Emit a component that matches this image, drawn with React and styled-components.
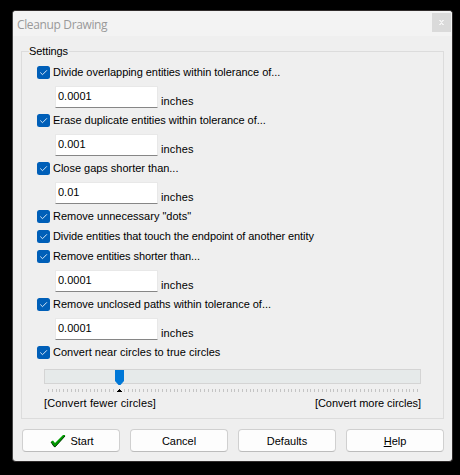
import React from "react";
import styled, { createGlobalStyle } from "styled-components";

const GlobalStyle = createGlobalStyle`
  * { box-sizing: border-box; }
  body { margin: 0; background: #000; overflow: hidden; }
`;

const Desktop = styled.main`
  width: 460px;
  height: 475px;
  padding: 10px 7px 13px 12px;
  background: #000;
  color: #000;
  font: 11px/14px "Liberation Sans", Arial, sans-serif;
`;

const Dialog = styled.section`
  width: 441px;
  height: 452px;
  display: flex;
  flex-direction: column;
  border: 1px solid #302c2c;
  border-left-color: #454545;
  border-radius: 4px;
  background: #efefef;
  overflow: hidden;
`;

const TitleBar = styled.header`
  flex: 0 0 25px;
  display: flex;
  justify-content: space-between;
  align-items: flex-start;
  padding: 2px 1px 0 4px;
  background: #f3f3f3;
`;

const Title = styled.h1`
  margin: 0;
  padding-top: 3px;
  color: #999;
  font: 400 12px/18px "Open Sans", "Noto Sans", sans-serif;
  letter-spacing: -0.36px;
`;

const CloseButton = styled.button`
  width: 19px;
  height: 19px;
  display: grid;
  place-items: center;
  padding: 0;
  border: 0;
  background: #dadada;
`;

const Body = styled.div`
  flex: 1;
  display: flex;
  flex-direction: column;
  padding: 9px 7px 0 8px;
`;

const Settings = styled.fieldset`
  height: 374px;
  margin: 0;
  min-width: 0;
  width: 423px;
  padding: 4px 0 0 15px;
  border: 1px solid #dcdcdc;
`;

const Legend = styled.legend`
  height: 13px;
  margin-left: -8px;
  padding: 0 1px 0 0;
  line-height: 12px;
`;

const Label = styled.span`
  white-space: pre;
  letter-spacing: ${(p) => p.$spacing || 0}px;
`;

const CheckRow = styled.label`
  height: 20px;
  display: flex;
  align-items: center;
  gap: 3px;
`;

const CheckMark = styled.span`
  width: 13px;
  height: 13px;
  display: grid;
  place-items: center;
  border-radius: 2.5px;
  background: #005fb8;
`;

const ValueRow = styled.div`
  height: 28px;
  display: flex;
  align-items: flex-start;
  gap: 3px;
  padding: 4px 0 0 18px;
`;

const ValueInput = styled.input`
  width: 103px;
  height: 22px;
  padding: 0 3px 2px 2px;
  border: 1px solid #e8e8e8;
  border-bottom-color: #868686;
  border-radius: 1px;
  outline: 0;
  background: #fff;
  color: #000;
  font: inherit;
`;

const Unit = styled.span`
  padding-top: 8px;
  letter-spacing: 0.15px;
`;

const Slider = styled.div`
  width: 377px;
  margin: 7px 0 0 7px;
`;

const Track = styled.div`
  height: 15px;
  padding-left: 70px;
  border: 1px solid #d4d4d4;
  background: #e6eaea;
`;

const Drawing = styled.svg`
  display: block;
  flex: none;
`;

const Captions = styled.div`
  display: flex;
  justify-content: space-between;
  margin-top: 3px;
`;

const Buttons = styled.footer`
  display: flex;
  gap: 10px;
  margin-top: 10px;
  padding-left: 1px;
`;

const Button = styled.button`
  width: 98px;
  height: 23px;
  display: flex;
  align-items: center;
  justify-content: center;
  gap: 4px;
  padding: 0;
  border: 1px solid #d0d0d0;
  border-bottom-color: #bcbcbc;
  border-radius: 4px;
  background: #fdfdfd;
  color: #000;
  font: inherit;
`;

const StartButton = styled(Button)`
  padding-left: 2px;
`;

const options = [
  { text: "Divide overlapping entities within tolerance of...", value: "0.0001", spacing: -0.04 },
  { text: "Erase duplicate entities within tolerance of...", value: "0.001", spacing: -0.04 },
  { text: "Close gaps shorter than...", value: "0.01", spacing: -0.02 },
  { text: 'Remove unnecessary "dots"' },
  { text: "Divide entities that touch the endpoint of another entity", spacing: -0.08 },
  { text: "Remove entities shorter than...", value: "0.0001", spacing: -0.09 },
  { text: "Remove unclosed paths within tolerance of...", value: "0.0001", spacing: -0.02 },
  { text: "Convert near circles to true circles", spacing: 0.03 },
];

const ticks = Array.from({ length: 98 }, (_, i) => Math.round(4 + (i * 369) / 97));

function Option({ text, value, spacing }) {
  return (
    <>
      <CheckRow>
        <CheckMark>
          <Drawing width="13" height="13" viewBox="0 0 13 13">
            <path d="M3.3 6.5 5.5 8.7 9.9 4.3" fill="none" stroke="#d5e6f5" strokeWidth="1" />
          </Drawing>
        </CheckMark>
        <Label $spacing={spacing}>{text}</Label>
      </CheckRow>
      {value && (
        <ValueRow>
          <ValueInput defaultValue={value} aria-label={text} />
          <Unit>inches</Unit>
        </ValueRow>
      )}
    </>
  );
}

export default function App() {
  return (
    <Desktop>
      <GlobalStyle />
      <Dialog>
        <TitleBar>
          <Title>Cleanup Drawing</Title>
          <CloseButton aria-label="Close">
            <Drawing width="5" height="5" viewBox="0 0 5 5" shapeRendering="crispEdges">
              <path d="M0 0h2v1H0zM3 0h2v1H3zM1 1h3v1H1zM2 2h1v1H2zM1 3h3v1H1zM0 4h2v1H0zM3 4h2v1H3z" fill="#f3f3f3" />
            </Drawing>
          </CloseButton>
        </TitleBar>
        <Body>
          <Settings>
            <Legend><Label $spacing={-0.1}>Settings</Label></Legend>
            {options.map((o) => <Option key={o.text} {...o} />)}
            <Slider>
              <Track>
                <Drawing width="9" height="15" viewBox="0 0 9 15">
                  <path d="M0 0h9v11L5.5 15h-2L0 11z" fill="#0078d7" />
                </Drawing>
              </Track>
              <Drawing width="377" height="9" viewBox="0 0 377 9" shapeRendering="crispEdges">
                {ticks.map((x) => <path key={x} d={`M${x} 5h1v3h-1z`} fill="#c4c4c4" />)}
                <path d="M72 5h7v3h-7z" fill="#efefef" />
                <path d="M75 5h1v1h1v1h1v1h-5V7h1V6h1z" fill="#000" />
              </Drawing>
              <Captions>
                <Label $spacing={0.14}>[Convert fewer circles]</Label>
                <Label $spacing={-0.04}>[Convert more circles]</Label>
              </Captions>
            </Slider>
          </Settings>
          <Buttons>
            <StartButton>
              <Drawing width="16" height="14" viewBox="0 0 16 14">
                <path d="M1 7.5 3 6.5 5 9 13 1 15.3 1 14.3 3 5 13 3.5 12z" fill="#009a00" />
                <path d="M1 8 4 12.5 5.2 12.8 15 2" fill="none" stroke="#003800" strokeWidth="1" />
              </Drawing>
              <Label>Start</Label>
            </StartButton>
            <Button><Label>Cancel</Label></Button>
            <Button><Label>Defaults</Label></Button>
            <Button><Label><u>H</u>elp</Label></Button>
          </Buttons>
        </Body>
      </Dialog>
    </Desktop>
  );
}
